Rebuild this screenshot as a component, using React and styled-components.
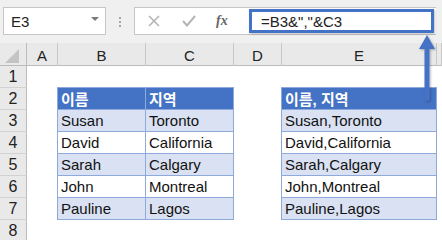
import styled, { createGlobalStyle } from 'styled-components';

const GlobalStyle = createGlobalStyle`
    body {
        margin: 0;
        background: #ffffff;
        font-family: "Liberation Sans", "Noto Sans CJK KR", sans-serif;
    }
`;

const names = [
    ['Susan', 'Toronto'],
    ['David', 'California'],
    ['Sarah', 'Calgary'],
    ['John', 'Montreal'],
    ['Pauline', 'Lagos'],
];

const columns = ['A', 'B', 'C', 'D', 'E', ''];

const App = () => {
    return (
    <Window>
        <GlobalStyle />
        <Toolbar>
            <NameBox>
                <span>E3</span>
                <Caret />
            </NameBox>
            <Grip>
                <i />
                <i />
                <i />
            </Grip>
            <FormulaBox>
                <FormulaButtons>
                    <svg width="12" height="12" viewBox="0 0 12 12">
                        <path d="M1 1 L11 11 M11 1 L1 11" stroke="#b4b4b4" strokeWidth="1.6" fill="none" />
                    </svg>
                    <svg width="14" height="12" viewBox="0 0 14 12">
                        <path d="M1 6 L5 10.5 L13 1" stroke="#b4b4b4" strokeWidth="2" fill="none" />
                    </svg>
                    <Fx>fx</Fx>
                </FormulaButtons>
                <FormulaInput>=B3&amp;","&amp;C3</FormulaInput>
            </FormulaBox>
        </Toolbar>

        <Sheet>
            <Corner><span /></Corner>
            {columns.map((c) => (
                <ColHead key={c || 'f'}>{c}</ColHead>
            ))}
            {[1, 2, 3, 4, 5, 6, 7, 8].map((n) => (
                <RowHead key={n} style={{ gridRow: n + 1 }}>{n}</RowHead>
            ))}

            <Table $col="3 / 5">
                <Row $kind="head">
                    <Cell>이름</Cell>
                    <Cell>지역</Cell>
                </Row>
                {names.map(([a, b], i) => (
                    <Row key={a} $kind={i % 2 === 0 ? 'band' : 'plain'}>
                        <Cell>{a}</Cell>
                        <Cell>{b}</Cell>
                    </Row>
                ))}
            </Table>

            <Table $col="6 / 7">
                <Row $kind="head">
                    <Cell>이름, 지역</Cell>
                </Row>
                {names.map(([a, b], i) => (
                    <Row key={a} $kind={i % 2 === 0 ? 'band' : 'plain'}>
                        <Cell>{a},{b}</Cell>
                    </Row>
                ))}
            </Table>
        </Sheet>

        <Highlight />
        <Arrow width="20" height="72" viewBox="0 0 20 72">
            <defs>
                <filter id="sh" x="-50%" y="-20%" width="200%" height="140%">
                    <feDropShadow dx="1" dy="1" stdDeviation="0.8" floodColor="#000" floodOpacity="0.3" />
                </filter>
            </defs>
            <g filter="url(#sh)">
                <path d="M9 1 L17 15 L1 15 Z" fill="#4472c4" />
                <rect x="6.5" y="13" width="5" height="54" rx="2.5" fill="#4472c4" />
            </g>
        </Arrow>
    </Window>
    );
};

const Window = styled.div`
    position: relative;
    width: 442px;
    height: 240px;
    overflow: hidden;
    background: #ffffff;
`;

const Toolbar = styled.div`
    display: flex;
    align-items: flex-start;
    height: 43px;
    box-sizing: border-box;
    padding: 7px 0 0 3px;
    background: #f0f0f0;
`;

const NameBox = styled.div`
    display: flex;
    align-items: center;
    justify-content: space-between;
    box-sizing: border-box;
    width: 103px;
    height: 28px;
    padding: 0 6px 0 7px;
    background: #ffffff;
    border: 1px solid #c6c6c6;
    font-size: 15px;
    color: #222;
`;

const Caret = styled.span`
    width: 0;
    height: 0;
    border-left: 4px solid transparent;
    border-right: 4px solid transparent;
    border-top: 4px solid #7a7a7a;
    margin-top: -4px;
`;

const Grip = styled.div`
    display: flex;
    flex-direction: column;
    gap: 2px;
    margin: 10px 13px 0 13px;

    i {
        display: block;
        width: 2px;
        height: 2px;
        background: #a8a8a8;
    }
`;

const FormulaBox = styled.div`
    display: flex;
    align-items: center;
    box-sizing: border-box;
    width: 302px;
    height: 28px;
    background: #ffffff;
    border: 1px solid #c6c6c6;
    border-right: none;
`;

const FormulaButtons = styled.div`
    display: flex;
    align-items: center;
    gap: 22px;
    padding-left: 13px;
    width: 112px;
    box-sizing: border-box;
`;

const Fx = styled.span`
    font-family: "Liberation Serif", serif;
    font-style: italic;
    font-weight: bold;
    font-size: 14px;
    color: #666;
    margin-left: -2px;
`;

const FormulaInput = styled.div`
    padding-left: 14px;
    font-size: 15px;
    color: #222;
`;

const Sheet = styled.div`
    display: grid;
    grid-template-columns: 27px 31px 88px 88px 48px 155px 1fr;
    grid-template-rows: 23px repeat(8, 22px);
`;

const headBase = `
    display: flex;
    align-items: center;
    justify-content: center;
    box-sizing: border-box;
    background: #e9e9e9;
    font-size: 15px;
    color: #222;
`;

const Corner = styled.div`
    ${headBase}
    position: relative;
    border-right: 1px solid #bcbcbc;
    border-bottom: 1px solid #bcbcbc;

    span {
        width: 0;
        height: 0;
        border-left: 14px solid transparent;
        border-bottom: 14px solid #c4c4c4;
        margin: 3px 0 0 -3px;
    }
`;

const ColHead = styled.div`
    ${headBase}
    padding-top: 3px;
    border-bottom: 1px solid #bcbcbc;
    border-right: 1px solid #c8c8c8;
    background-clip: padding-box;

    &:last-of-type {
        border-right: none;
    }
`;

const RowHead = styled.div`
    ${headBase}
    grid-column: 1;
    font-size: 16px;
    border-right: 1px solid #bcbcbc;
    border-bottom: 1px solid #d2d2d2;
`;

const Table = styled.div`
    grid-column: ${(p) => p.$col};
    grid-row: 3 / 9;
    display: flex;
    flex-direction: column;
    margin: -1px 0 0 -1px;
    border: 1px solid #8ea9db;
`;

const rowColors = {
    head: '#4472c4',
    band: '#d9e1f2',
    plain: '#ffffff',
};

const Row = styled.div`
    display: flex;
    height: 22px;
    box-sizing: border-box;
    background: ${(p) => rowColors[p.$kind]};
    color: ${(p) => (p.$kind === 'head' ? '#ffffff' : '#111')};
    font-weight: ${(p) => (p.$kind === 'head' ? 'bold' : 'normal')};
    border-bottom: 1px solid #8ea9db;

    &:last-child {
        border-bottom: none;
        height: 21px;
    }
`;

const Cell = styled.div`
    flex: 1;
    display: flex;
    align-items: center;
    padding-left: 3px;
    font-size: 15px;
    white-space: nowrap;
    overflow: hidden;

    & + & {
        border-left: 1px solid #8ea9db;
    }
`;

const Highlight = styled.div`
    position: absolute;
    left: 249px;
    top: 9px;
    width: 185px;
    height: 24px;
    box-sizing: border-box;
    border: 3px solid #4472c4;
    box-shadow: 1px 1px 2px rgba(0, 0, 0, 0.25);
`;

const Arrow = styled.svg`
    position: absolute;
    left: 418px;
    top: 34px;
`;

export default App;
